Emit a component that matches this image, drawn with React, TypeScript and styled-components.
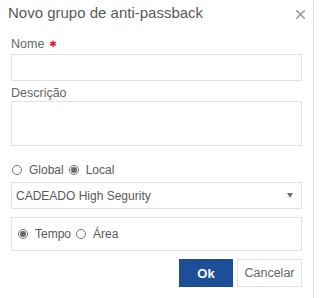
import React from 'react';
import styled, { createGlobalStyle } from 'styled-components';
import { X } from 'lucide-react';

const GlobalStyle = createGlobalStyle`
  body {
    margin: 0;
    background: #fff;
    font-family: "Liberation Sans", Arial, sans-serif;
  }
`;

const SCDialog = styled.div`
  width: 313px;
  height: 298px;
  border-right: 1px solid #dcdcdc;
  background: #fff;
  display: flex;
  flex-direction: column;
`;

const SCHeader = styled.div`
  height: 30px;
  display: flex;
  align-items: flex-start;
  justify-content: space-between;
  padding: 4px 8px 0 8px;
  box-sizing: border-box;
`;

const SCTitle = styled.h4`
  margin: 0;
  font-size: 15px;
  line-height: 18px;
  font-weight: normal;
  color: #5a5a5a;
`;

const SCClose = styled.button`
  border: none;
  background: none;
  padding: 0;
  margin-top: 3px;
  margin-right: -3px;
  color: #9a9a9a;
  display: flex;
  cursor: pointer;
`;

const SCBody = styled.div`
  padding: 0 11px;
  display: flex;
  flex-direction: column;
`;

const SCLabel = styled.label<{ $top: number }>`
  margin-top: ${(p) => p.$top}px;
  font-size: 12.5px;
  line-height: 14px;
  color: #666;
  display: flex;
  align-items: center;
  gap: 5px;
`;

const SCRequired = styled.span`
  color: #e01b1b;
  font-size: 9px;
  font-family: "DejaVu Sans", sans-serif;
`;

const SCInput = styled.input`
  margin-top: 3px;
  height: 27px;
  box-sizing: border-box;
  border: 1px solid #e2e2e2;
  outline: none;
  padding: 0 5px;
`;

const SCTextarea = styled.textarea`
  margin-top: 1px;
  height: 45px;
  box-sizing: border-box;
  border: 1px solid #e2e2e2;
  outline: none;
  resize: none;
  padding: 4px 5px;
`;

const SCRadioRow = styled.div<{ $top: number }>`
  margin-top: ${(p) => p.$top}px;
  display: flex;
  align-items: center;
  font-size: 12px;
  line-height: 14px;
  color: #5a5a5a;
`;

const SCRadioLabel = styled.label`
  display: flex;
  align-items: center;
  margin-right: 4px;
`;

const SCRadio = styled.input`
  appearance: none;
  width: 10px;
  height: 10px;
  margin: 0 7px 0 1px;
  border: 1px solid #707070;
  border-radius: 50%;
  box-sizing: border-box;
  position: relative;
  &:checked::after {
    content: '';
    position: absolute;
    left: 1px;
    top: 1px;
    width: 6px;
    height: 6px;
    border-radius: 50%;
    background: #6a6a6a;
  }
`;

const SCSelect = styled.div`
  margin-top: 5px;
  height: 27px;
  box-sizing: border-box;
  border: 1px solid #e2e2e2;
  display: flex;
  align-items: center;
  justify-content: space-between;
  padding: 0 8px 0 4px;
  font-size: 12px;
  color: #5a5a5a;
`;

const SCArrow = styled.span`
  width: 0;
  height: 0;
  border-left: 3.5px solid transparent;
  border-right: 3.5px solid transparent;
  border-top: 5px solid #707070;
`;

const SCBox = styled.div`
  margin-top: 8px;
  height: 34px;
  box-sizing: border-box;
  border: 1px solid #e2e2e2;
  display: flex;
  align-items: center;
  padding: 0 5px;
  font-size: 12px;
  color: #5a5a5a;
`;

const SCFooter = styled.div`
  margin-top: 8px;
  display: flex;
  justify-content: flex-end;
  gap: 4px;
`;

const SCButton = styled.button<{ $primary?: boolean }>`
  height: 28px;
  box-sizing: border-box;
  padding: 0;
  width: ${(p) => (p.$primary ? '54px' : '65px')};
  border: 1px solid ${(p) => (p.$primary ? '#1b4d94' : '#e2e2e2')};
  background: ${(p) => (p.$primary ? '#1d4f98' : '#fff')};
  color: ${(p) => (p.$primary ? '#fff' : '#666')};
  font-family: "Liberation Sans", Arial, sans-serif;
  font-size: ${(p) => (p.$primary ? '13px' : '12.5px')};
  font-weight: ${(p) => (p.$primary ? 'bold' : 'normal')};
  cursor: pointer;
`;

const App = () => {
  const [scope, setScope] = React.useState('local');
  const [mode, setMode] = React.useState('tempo');

  return (
    <>
      <GlobalStyle />
      <SCDialog>
        <SCHeader>
          <SCTitle>Novo grupo de anti-passback</SCTitle>
          <SCClose>
            <X size={15} strokeWidth={2.6} />
          </SCClose>
        </SCHeader>
        <SCBody>
          <SCLabel $top={7}>
            Nome <SCRequired>✱</SCRequired>
          </SCLabel>
          <SCInput />
          <SCLabel $top={5}>Descrição</SCLabel>
          <SCTextarea />
          <SCRadioRow $top={17}>
            <SCRadioLabel>
              <SCRadio type="radio" checked={scope === 'global'} onChange={() => setScope('global')} />
              Global
            </SCRadioLabel>
            <SCRadioLabel>
              <SCRadio type="radio" checked={scope === 'local'} onChange={() => setScope('local')} />
              Local
            </SCRadioLabel>
          </SCRadioRow>
          <SCSelect>
            CADEADO High Segurity
            <SCArrow />
          </SCSelect>
          <SCBox>
            <SCRadioLabel>
              <SCRadio type="radio" checked={mode === 'tempo'} onChange={() => setMode('tempo')} />
              Tempo
            </SCRadioLabel>
            <SCRadioLabel>
              <SCRadio type="radio" checked={mode === 'area'} onChange={() => setMode('area')} />
              Área
            </SCRadioLabel>
          </SCBox>
          <SCFooter>
            <SCButton $primary>Ok</SCButton>
            <SCButton>Cancelar</SCButton>
          </SCFooter>
        </SCBody>
      </SCDialog>
    </>
  );
};

export default App;
